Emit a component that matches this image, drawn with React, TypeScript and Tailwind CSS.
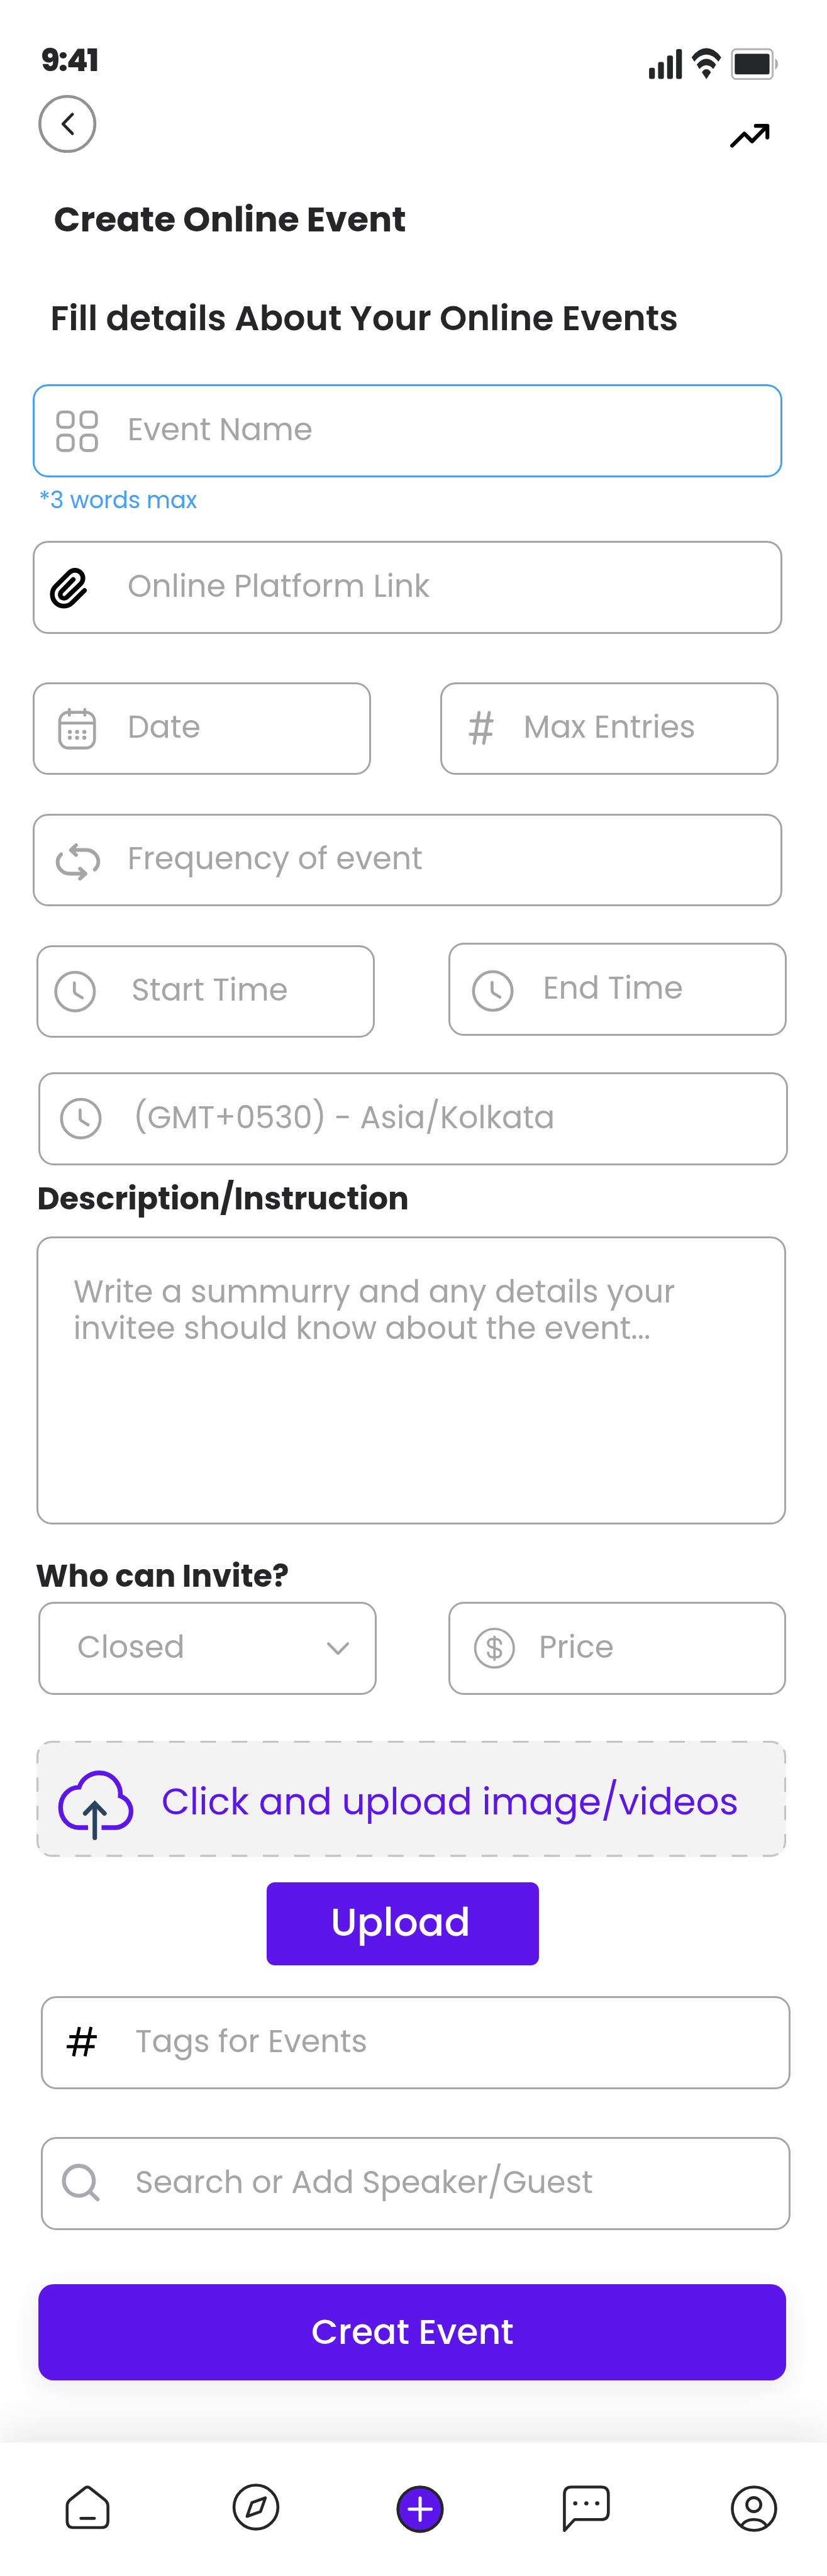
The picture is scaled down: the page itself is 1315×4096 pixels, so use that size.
import type { ReactNode } from "react";

const GRAY = "#a5a5a5";
const INK = "#252628";
const PURPLE = "#5c16ea";

/* Leading slot of a field: the drawing area spans the field's full height, border excluded. */
function Lead({ children, wide = true }: { children: ReactNode; wide?: boolean }) {
  return (
    <svg
      className={wide ? "h-[141.4px] w-[147.5px] shrink-0" : "h-[141.4px] w-[129.1px] shrink-0"}
      viewBox={wide ? "4 4 192 184" : "4 4 168 184"}
      fill="none"
      stroke={GRAY}
      strokeWidth={6}
      strokeLinecap="round"
      strokeLinejoin="round"
    >
      {children}
    </svg>
  );
}

function Clock({ x, y }: { x: number; y: number }) {
  return (
    <g transform={`translate(${x - 48} ${y - 48}) scale(4)`} strokeWidth={1.5}>
      <circle cx="12" cy="12" r="10" />
      <path d="M15.71 15.18l-3.1-1.85c-.54-.32-.98-1.09-.98-1.72v-4.1" />
    </g>
  );
}

function Field({ icon, label, className = "", children }: { icon?: ReactNode; label: string; className?: string; children?: ReactNode }) {
  return (
    <div className={`flex h-[147.5px] items-center rounded-[24.6px] border-[3px] ${className}`}>
      {icon}
      <span className="whitespace-pre pb-1 text-[49.16px] leading-[74px] text-[#a5a5a5]">{label}</span>
      {children}
    </div>
  );
}

function StatusIcons() {
  return (
    <svg className="mt-[12.3px] h-[53.8px] w-[215.1px] self-start" viewBox="1340 96 280 70">
      <g fill={INK} transform="translate(1320 80) scale(0.33333)">
        <rect x="72" y="180" width="36" height="69" rx="12" />
        <rect x="128" y="144" width="36" height="105" rx="12" />
        <rect x="184" y="104" width="36" height="145" rx="12" />
        <rect x="240" y="64" width="36" height="185" rx="12" />
        <path d="M336 115Q378 58 428 58Q478 58 520 115L503 142Q468 98 428 98Q388 98 353 142Z" />
        <path d="M368 160Q397 124 428 124Q460 124 488 160L471 188Q452 164 428 164Q404 164 385 188Z" />
        <path d="M400 208Q412 189 428 189Q444 189 456 208L428 250Z" />
        <rect x="586.5" y="64.5" width="253" height="185" rx="26" fill="none" stroke="#b3b3b3" strokeWidth="11" />
        <rect x="604" y="93" width="216" height="128" rx="13" />
        <path d="M855 122Q873 135 873 156Q873 178 855 191Z" fill="#adadad" />
      </g>
    </svg>
  );
}

function NavIcon({ cx, cy, className = "", children }: { cx: number; cy: number; className?: string; children: ReactNode }) {
  return (
    <svg
      className={`h-[86px] w-[86px] ${className}`}
      viewBox={`${cx - 56} ${cy - 56} 112 112`}
      fill="none"
      stroke={INK}
      strokeWidth={6}
      strokeLinecap="round"
      strokeLinejoin="round"
    >
      {children}
    </svg>
  );
}

export default function App() {
  return (
    <div className="flex h-[4096px] w-[1315px] flex-col overflow-hidden bg-[#fefefe] font-[Poppins,sans-serif] text-[#262628]">
      <div className="mt-[61.4px] flex h-[70px] shrink-0 items-center justify-between pl-[65px] pr-[70.6px]">
        <span className="text-[49.16px] font-extrabold leading-[70px] tracking-[-1.8px]">9:41</span>
        <StatusIcons />
      </div>

      <div className="mt-[19.2px] flex h-[92.2px] shrink-0 items-start justify-between pl-[61.4px] pr-[86px]">
        <svg className="h-[92.2px] w-[92.2px]" viewBox="80 196 120 120" fill="none" strokeLinecap="round" strokeLinejoin="round">
          <circle cx="140" cy="256" r="57" stroke="#929292" strokeWidth="6" />
          <path d="M150.500 236L131 256L150.500 276" stroke={INK} strokeWidth="6" />
        </svg>
        <svg className="mt-[43px] h-[43px] w-[70.7px]" viewBox="1508 252 92 56" fill="none" stroke="#000" strokeWidth="8" strokeLinecap="round" strokeLinejoin="round">
          <path d="M1516 301L1541.300 276L1557.300 292L1589 260M1565 260H1589V284" />
        </svg>
      </div>

      <h1 className="ml-[85.4px] mt-[65.5px] h-[82px] shrink-0 whitespace-pre text-[55.3px] font-bold leading-[82px]">Create Online Event</h1>
      <h2 className="ml-[79.9px] mt-[74.9px] h-[82px] shrink-0 whitespace-pre text-[55.3px] font-semibold leading-[82px]">Fill details About Your Online Events</h2>

      <Field
        className="ml-[52.2px] mt-[64.3px] w-[1192.1px] shrink-0 border-[#43a0f8]"
        label="Event Name"
        icon={
          <Lead>
            <rect x="52" y="56" width="32" height="32" rx="10" />
            <rect x="100" y="56" width="32" height="32" rx="10" />
            <rect x="52" y="104" width="32" height="32" rx="10" />
            <rect x="100" y="104" width="32" height="32" rx="10" />
          </Lead>
        }
      />
      <p className="ml-[61.7px] mt-[11.2px] h-[50px] shrink-0 text-[36.87px] leading-[50px] text-[#43a0f8]">*3 words max</p>

      <Field
        className="ml-[52.2px] mt-[40.2px] w-[1192.1px] shrink-0 border-[#a5a5a5]"
        label="Online Platform Link"
        icon={
          <Lead>
            <path
              transform="translate(22 -290) scale(0.33333)"
              stroke="#000"
              strokeWidth="29"
              d="M256 1178L179 1254A72 72 0 0 1 77 1152L162 1067A49 49 0 0 1 232 1137L146 1220A24 24 0 0 1 112 1186L186 1110"
            />
          </Lead>
        }
      />

      <div className="ml-[52.2px] mt-[76.8px] flex shrink-0 gap-[110.6px]">
        <Field
          className="w-[537.7px] border-[#a5a5a5]"
          label="Date"
          icon={
            <Lead>
              <g transform="translate(22 28) scale(0.33333)" strokeWidth="18">
                <rect x="102" y="102" width="216" height="222" rx="54" />
                <path d="M102 169H318" strokeLinecap="butt" />
                <path d="M162 84V120M258 84V120" />
                <g fill={GRAY} stroke="none">
                  <circle cx="165" cy="224" r="12.500" />
                  <circle cx="210" cy="224" r="12.500" />
                  <circle cx="255" cy="224" r="12.500" />
                  <circle cx="165" cy="260" r="12.500" />
                  <circle cx="210" cy="260" r="12.500" />
                  <circle cx="255" cy="260" r="12.500" />
                </g>
              </g>
            </Lead>
          }
        />
        <Field
          className="w-[537.7px] border-[#a5a5a5]"
          label="Max Entries"
          icon={
            <Lead wide={false}>
              <path strokeWidth="6.500" d="M64 79.700H107.500M62.500 107.300H105M80.500 62.500L70.500 126M101.500 62.500L90 126" />
            </Lead>
          }
        />
      </div>

      <Field
        className="ml-[52.2px] mt-[61.4px] w-[1192.1px] shrink-0 border-[#a5a5a5]"
        label="Frequency of event"
        icon={
          <Lead>
            <g transform="translate(22 -244) scale(0.33333)" strokeWidth="23">
              <path d="M204 927L171 957L204 988M175 957H265C308 957 342 990 342 1031C342 1050 334 1064 320 1078" />
              <path d="M111 984C97 997 89 1012 89 1031C89 1072 123 1104 165 1104H258M228 1073L262 1104L228 1135" />
            </g>
          </Lead>
        }
      />

      <div className="ml-[58.4px] mt-[58.4px] flex h-[150.6px] shrink-0 gap-[116.8px]">
        <Field className="mt-[3.1px] w-[537.7px] border-[#a5a5a5]" label="Start Time" icon={<Lead><Clock x={80} y={96} /></Lead>} />
        <Field className="w-[537.7px] border-[#a5a5a5]" label="End Time" icon={<Lead><Clock x={92} y={100} /></Lead>} />
      </div>

      <Field
        className="ml-[61.4px] mt-[55.3px] w-[1192.1px] shrink-0 border-[#a5a5a5]"
        label="(GMT+0530) - Asia/Kolkata"
        icon={<Lead><Clock x={88} y={96} /></Lead>}
      />

      <h3 className="ml-[59px] mt-[16.4px] h-[74px] shrink-0 text-[49.16px] font-bold leading-[74px]">Description/Instruction</h3>
      <div className="ml-[58.4px] mt-[23.3px] h-[457.8px] w-[1192.1px] shrink-0 rounded-[24.6px] border-[3px] border-[#a5a5a5] pl-[55.4px] pt-[55.2px] text-[49.16px] leading-[58px] text-[#a5a5a5]">
        Write a summurry and any details your
        <br />
        invitee should know about the event...
      </div>

      <h3 className="ml-[56.6px] mt-[44.5px] h-[74px] shrink-0 text-[49.16px] font-bold leading-[74px]">Who can Invite?</h3>
      <div className="ml-[61.4px] mt-[4.4px] flex shrink-0 gap-[113.7px]">
        <Field className="w-[537.7px] border-[#a5a5a5] pl-[58.4px]" label="Closed">
          <svg className="ml-auto mr-[36.9px] h-[43px] w-[43px]" viewBox="0 0 56 56" fill="none" stroke={GRAY} strokeWidth="5.500" strokeLinecap="round" strokeLinejoin="round">
            <path d="M8 19L28 39.500L48 19" />
          </svg>
        </Field>
        <Field
          className="w-[537.7px] border-[#a5a5a5]"
          label="Price"
          icon={
            <svg className="h-[141.4px] w-[141.3px] shrink-0" viewBox="4 4 184 184" fill="none" stroke={GRAY} strokeLinecap="round" strokeLinejoin="round">
              <g transform="translate(47.500 48) scale(4)" strokeWidth="1.200">
                <circle cx="12" cy="12" r="10" />
                <path d="M8.672 14.330c0 1.290.990 2.330 2.220 2.330h2.510c1.070 0 1.940-.910 1.940-2.030 0-1.220-.530-1.650-1.320-1.930l-4.030-1.400c-.790-.280-1.320-.710-1.320-1.930 0-1.120.870-2.030 1.940-2.030h2.510c1.230 0 2.220 1.040 2.220 2.330M12 6v12" />
              </g>
            </svg>
          }
        />
      </div>

      <div className="relative ml-[58.4px] mt-[73.8px] flex h-[184.4px] w-[1192.1px] shrink-0 items-center rounded-[24.6px] bg-[#f3f3f3]">
        <svg className="absolute inset-0 h-full w-full" viewBox="76 3604 1552 240" preserveAspectRatio="none" fill="none" stroke="#c4c4c4" strokeWidth="4">
          <path d="M86.800 3614.800A30 30 0 0 1 108 3606H1596A30 30 0 0 1 1617.200 3614.800" strokeDasharray="32.350 32.350" strokeDashoffset="-7.200" />
          <path d="M86.800 3833.200A30 30 0 0 0 108 3842H1596A30 30 0 0 0 1617.200 3833.200" strokeDasharray="32.350 32.350" strokeDashoffset="-7.200" />
          <path d="M86.800 3614.800A30 30 0 0 0 78 3636V3812A30 30 0 0 0 86.800 3833.200" strokeDasharray="29.200 29.200" strokeDashoffset="-9.200" />
          <path d="M1617.200 3614.800A30 30 0 0 1 1626 3636V3812A30 30 0 0 1 1617.200 3833.200" strokeDasharray="29.200 29.200" strokeDashoffset="-9.200" />
        </svg>
        <svg className="ml-[18.4px] h-[145.9px] w-[145.9px]" viewBox="0 -33 570 570" fill="none">
          <path d="M246 428H190C125 428 75.500 372 75.500 303C75.500 234 125 178 191 177.500A131.500 131.500 0 0 1 446.500 232A101 101 0 0 1 408 428H330" stroke={PURPLE} strokeWidth="29" />
          <path d="M288 492V285" stroke="#28445f" strokeWidth="28" strokeLinecap="round" />
          <path d="M228 340L288 278L348 340" stroke="#28445f" strokeWidth="28" strokeLinecap="round" />
        </svg>
        <span className="ml-[34.1px] whitespace-pre pt-[8px] text-[58.37px] leading-[84px] text-[#5c16ea]">Click and upload image/videos</span>
      </div>

      <button className="ml-[424.2px] mt-[40px] flex h-[132.1px] w-[433.2px] shrink-0 items-center justify-center rounded-[13px] bg-[#5c16ea] pb-[3px] pr-[8px] text-[61.4px] font-medium leading-[90px] text-white">
        Upload
      </button>

      <Field
        className="ml-[64.5px] mt-[49.1px] w-[1192.1px] shrink-0 border-[#a5a5a5]"
        label="Tags for Events"
        icon={
          <Lead>
            <path stroke="#000" strokeWidth="6.500" strokeLinecap="butt" d="M59 84H115.800M53.600 104.600H111.400M79.800 64L67.800 124.500M103.800 64L91.500 124.500" />
          </Lead>
        }
      />
      <Field
        className="ml-[64.5px] mt-[76.8px] w-[1192.1px] shrink-0 border-[#a5a5a5]"
        label="Search or Add Speaker/Guest"
        icon={
          <Lead>
            <g stroke="#a9aab1" strokeWidth="8.200">
              <circle cx="78.700" cy="90.600" r="31" />
              <path d="M101 113L117.500 129" />
            </g>
          </Lead>
        }
      />

      <button className="ml-[61.4px] mt-[86px] flex h-[153.6px] w-[1189px] shrink-0 items-center justify-center rounded-[24.6px] bg-[#5c16ea] pb-[2px] text-[55.3px] font-medium leading-[82px] text-white shadow-[0_12px_40px_rgba(0,0,0,0.08)]">
        Creat Event
      </button>

      <nav className="mt-[95.3px] flex grow items-start border-t-[3px] border-[#f3f3fa] bg-[#fefefe] pl-[96.4px] pt-[62.3px] shadow-[0_-15px_60px_rgba(0,0,0,0.085)]">
        <NavIcon cx={181.5} cy={5193}>
          <path d="M176 5150.500Q181.500 5145.800 187 5150.500L218 5175Q224 5180 224 5188V5218Q224 5232 211 5232H152Q139.500 5232 139.500 5218V5188Q139.500 5180 145 5175Z" />
          <path d="M168 5213H196" />
        </NavIcon>
        <NavIcon cx={530} cy={5193} className="ml-[181.7px]">
          <circle cx="530" cy="5189.700" r="45.500" />
          <path d="M549.500 5170.500L521.500 5180.500L511.500 5209L539.500 5199Z" />
        </NavIcon>
        <NavIcon cx={870} cy={5193} className="ml-[175.1px]">
          <circle cx="870" cy="5194" r="46" fill={PURPLE} />
          <path d="M847.500 5194H893M870 5171V5217" stroke="#fff" strokeWidth="6.500" />
        </NavIcon>
        <NavIcon cx={1213} cy={5193} className="ml-[177.4px]">
          <path d="M1168 5238V5163Q1168 5148 1183 5148H1244Q1259 5148 1259 5163V5200Q1259 5215.500 1244 5215.500H1189Z" />
          <g fill={INK} stroke="none">
            <circle cx="1190.500" cy="5182" r="4.300" />
            <circle cx="1213.500" cy="5182" r="4.300" />
            <circle cx="1236" cy="5182" r="4.300" />
          </g>
        </NavIcon>
        <NavIcon cx={1561} cy={5193} className="ml-[181.3px]">
          <circle cx="1561" cy="5193" r="45" />
          <circle cx="1560.500" cy="5184.500" r="14.500" />
          <path d="M1535 5229Q1542 5215.500 1560.500 5215.500Q1579 5215.500 1587 5229" />
        </NavIcon>
      </nav>
    </div>
  );
}
